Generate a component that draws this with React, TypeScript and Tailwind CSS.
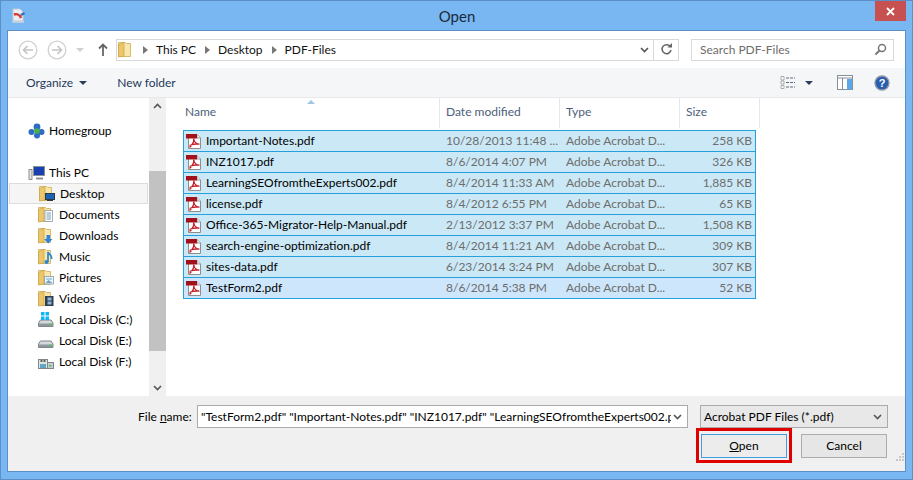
const font = { fontFamily: 'Lato, "Noto Sans", sans-serif' }

const files = [
  ["Important-Notes.pdf", "10/28/2013 11:48 ...", "258 KB"],
  ["INZ1017.pdf", "8/6/2014 4:07 PM", "326 KB"],
  ["LearningSEOfromtheExperts002.pdf", "8/4/2014 11:33 AM", "1,885 KB"],
  ["license.pdf", "8/4/2012 6:55 PM", "65 KB"],
  ["Office-365-Migrator-Help-Manual.pdf", "2/13/2012 3:37 PM", "1,508 KB"],
  ["search-engine-optimization.pdf", "8/4/2014 11:21 AM", "309 KB"],
  ["sites-data.pdf", "6/23/2014 3:24 PM", "307 KB"],
  ["TestForm2.pdf", "8/6/2014 5:38 PM", "52 KB"],
]

function PdfIcon() {
  return (
    <svg width="16" height="17" viewBox="0 0 16 17" className="shrink-0">
      <path d="M2.500 1.500h8.500l3.500 3.500v10.500h-12z" fill="#fff" stroke="#8e8e8e" />
      <path d="M11 1.500v3.500h3.500" fill="#eee" stroke="#9a9a9a" />
      <path d="M0 1h11v4.500H0z" fill="#a2101b" />
      <path d="M3.500 14.500c2.200-2 4.700-5.500 4.200-9M7.700 5.500c.4 3.300 2.600 5.500 5.800 5.700M3.500 12.500c3.200-1.500 6.500-1.800 10-1.300" fill="none" stroke="#c21f2a" strokeWidth="1.300" />
    </svg>
  )
}

function Folder({ children }: { children?: React.ReactNode }) {
  return (
    <svg width="16" height="17" viewBox="0 0 16 17" className="shrink-0">
      <path d="M.500 1.500h7l1 1h4v13h-12z" fill="#f8e6ad" stroke="#d6bb6e" />
      <path d="M.500 3.500l5.500-2v13.500l-5.500 1z" fill="#ecc66a" stroke="#c7a349" strokeWidth=".7" />
      {children}
    </svg>
  )
}

const navIcons: Record<string, React.ReactNode> = {
  Desktop: <Folder><rect x="6.500" y="8.500" width="9" height="6" fill="#1d63b5" stroke="#2c3a48" /><path d="M8 15.500h6" stroke="#2c3a48" /></Folder>,
  Documents: <Folder><rect x="7" y="4.500" width="7.500" height="11" fill="#fff" stroke="#8a9aa8" strokeWidth=".8" /><path d="M8.500 7h4.500M8.500 9h4.500M8.500 11h4.500M8.500 13h4.500" stroke="#6a8fb0" strokeWidth=".9" /></Folder>,
  Downloads: <Folder><path d="M8.500 8h3.500v4h2.500l-4.300 4.500L6 12h2.500z" fill="#2f86d8" /></Folder>,
  Music: <Folder><path d="M10 14V4c.5 2.500 4.500 3 3.500 7" fill="none" stroke="#2a88d0" strokeWidth="1.700" /><circle cx="8.500" cy="14" r="2" fill="#2a88d0" /></Folder>,
  Pictures: <Folder><rect x="6.500" y="7.500" width="9" height="7.500" fill="#edf4f8" stroke="#8a9aa8" strokeWidth=".8" /><path d="M7.500 14l3-3 4 3z" fill="#6fa3bf" /><rect x="8" y="9" width="6" height="2" fill="#a9d0e3" /></Folder>,
  Videos: <Folder><rect x="7" y="6" width="8.500" height="10" fill="#2d3f50" /><path d="M9.500 7.500h4v3h-4zM9.500 11.500h4v3h-4z" fill="#8fb6d6" /></Folder>,
}

function Drive({ children }: { children?: React.ReactNode }) {
  return (
    <svg width="16" height="17" viewBox="0 0 16 17" className="shrink-0">
      <path d="M2.500 9h10.500l2 3v3.500H.500V12z" fill="#d5d9dc" stroke="#7f868c" />
      <path d="M1 12.500h14v2.500H1z" fill="#8f989f" />
      <rect x="11.500" y="12.500" width="2.500" height="1.500" fill="#55c455" />
      {children}
    </svg>
  )
}

function NavRow({ label, active, icon }: { label: string; active?: boolean; icon: React.ReactNode }) {
  return (
    <div className={`ml-px flex h-[21px] w-[139px] items-center gap-[5px] pl-[29px] ${active ? "border border-[#dcdcdc] bg-[#f5f5f5]" : ""}`}>
      {icon}
      <span className="text-black">{label}</span>
    </div>
  )
}

function Chev({ className = "" }: { className?: string }) {
  return (
    <svg width="9" height="6" viewBox="0 0 9 6" className={className}>
      <path d="M1 1l3.500 3.500L8 1" fill="none" stroke="#555" strokeWidth="1.600" />
    </svg>
  )
}

function Tri({ color = "#2b3f5c" }: { color?: string }) {
  return (
    <svg width="8" height="4" viewBox="0 0 8 4">
      <path d="M0 0h8L4 4z" fill={color} />
    </svg>
  )
}

function Crumb({ label }: { label: string }) {
  return (
    <>
      <svg width="5" height="8" viewBox="0 0 5 8" className="ml-[9px] mr-[8px]">
        <path d="M0 0l5 4-5 4z" fill="#777" />
      </svg>
      <span className="text-[#111]">{label}</span>
    </>
  )
}

function NavCircle({ dir }: { dir: "l" | "r" }) {
  return (
    <svg width="20" height="20" viewBox="0 0 20 20">
      <circle cx="10" cy="10" r="8.800" fill="#fff" stroke="#d0d0d0" strokeWidth="1.300" />
      <path d={dir === "l" ? "M15 10H6M9.500 6L5.500 10l4 4" : "M5 10h9M10.500 6l4 4-4 4"} fill="none" stroke="#c4c4c4" strokeWidth="1.600" />
    </svg>
  )
}

export default function App() {
  return (
    <div style={font} className="flex h-[480px] w-[913px] flex-col overflow-hidden border border-[#5b8fc5] bg-[#78b7f2] text-[12px]">
      {/* Title bar */}
      <div className="flex h-[29px] shrink-0 items-start">
        <div className="flex h-[30px] w-[30px] items-center pl-[10px]">
          <svg width="16" height="16" viewBox="0 0 16 16">
            <path d="M2 1h7l3 3v9H2z" fill="#e9edf1" stroke="#c4ccd4" />
            <path d="M1 14h12" stroke="#cfd6dc" strokeWidth="1.500" />
            <path d="M3 6.500c3-1 6 .5 7 3.500" fill="none" stroke="#d9332b" strokeWidth="2.500" />
            <path d="M10 7l3.500-2" stroke="#2f6fc8" strokeWidth="2.500" />
          </svg>
        </div>
        <div className="flex-1 pl-[8px] pt-[5px] text-center text-[15px] leading-[20px] text-[#1d2a3a]">Open</div>
        <div className="mr-[6px] flex h-[20px] w-[31px] items-center justify-center bg-[#c75050]">
          <svg width="9" height="9" viewBox="0 0 9 9">
            <path d="M1 1l7 7M8 1L1 8" stroke="#fff" strokeWidth="1.800" />
          </svg>
        </div>
      </div>

      <div className="mx-[6px] mb-[7px] flex min-h-0 flex-1 flex-col border border-[#5b8fc5] bg-white">
        {/* Address row */}
        <div className="flex h-[37px] shrink-0 items-center pl-[10px] pr-[11px]">
          <NavCircle dir="l" />
          <div className="w-[9px]" />
          <NavCircle dir="r" />
          <div className="ml-[9px]"><Tri color="#d0d0d0" /></div>
          <svg width="12" height="14" viewBox="0 0 12 14" className="ml-[13px]">
            <path d="M6 1v12M2 5.500L6 1.500l4 4" fill="none" stroke="#666" strokeWidth="1.800" />
          </svg>
          <div className="ml-[7px] flex h-[22px] w-[563px] items-center border border-[#d9d9d9] pl-[1px]">
            <Folder />
            <div className="flex flex-1 items-center"><Crumb label="This PC" /><Crumb label="Desktop" /><Crumb label="PDF-Files" /></div>
            <Chev className="mr-[4px]" />
            <div className="flex h-full w-[25px] items-center justify-center border-l border-[#d9d9d9]">
              <svg width="13" height="13" viewBox="0 0 13 13">
                <path d="M10.500 4a4.500 4.500 0 1 0 .5 3" fill="none" stroke="#666" strokeWidth="1.500" />
                <path d="M7.500 4.500h4.500V0z" fill="#666" />
              </svg>
            </div>
          </div>
          <div className="ml-[12px] flex h-[22px] flex-1 items-center border border-[#d9d9d9] pl-[8px] pr-[4px] text-[#6d6d6d]">
            <span className="flex-1">Search PDF-Files</span>
            <svg width="13" height="13" viewBox="0 0 13 13" className="mr-[2px]">
              <circle cx="8" cy="5" r="3.500" fill="none" stroke="#777" strokeWidth="1.500" />
              <path d="M5.500 7.500L1.500 11.500" stroke="#777" strokeWidth="2" />
            </svg>
          </div>
        </div>

        {/* Command bar */}
        <div className="flex h-[30px] shrink-0 items-center border-b border-[#e6e8eb] bg-[#f5f6f7] text-[#1e395b]">
          <span className="ml-[18px]">Organize</span>
          <div className="ml-[6px]"><Tri /></div>
          <span className="ml-[30px]">New folder</span>
          <div className="flex-1" />
          <svg width="16" height="13" viewBox="0 0 16 13">
            <path d="M1 .5h3v3.500H1zM1 5h3v3H1zM1 9.500h3v3H1z" fill="#fff" stroke="#999" strokeWidth=".8" />
            <path d="M6 2h9M6 6.500h9M6 11h9" stroke="#5a6b80" strokeDasharray="3 1" />
          </svg>
          <div className="ml-[9px]"><Tri /></div>
          <svg width="17" height="16" viewBox="0 0 17 16" className="ml-[24px]">
            <rect x=".5" y=".5" width="15" height="14" fill="#fff" stroke="#8a8f96" />
            <path d="M.5 3h15M5.500 3v12" stroke="#8a8f96" />
            <rect x="10" y="4" width="5" height="10.500" fill="#5ba7ea" />
          </svg>
          <svg width="16" height="16" viewBox="0 0 16 16" className="ml-[20px] mr-[15px]">
            <circle cx="8" cy="8" r="7" fill="#2a5db0" stroke="#8d97a5" strokeWidth="1.300" />
            <text x="8" y="12" textAnchor="middle" fontSize="11" fontWeight="700" fill="#fff" fontFamily="Liberation Sans, sans-serif">?</text>
          </svg>
        </div>

        {/* Main */}
        <div className="flex min-h-0 flex-1 overflow-hidden">
          {/* Navigation */}
          <div className="w-[141px] shrink-0 overflow-hidden pt-[22px]">
            <div className="flex h-[21px] items-center gap-[4px] pl-[20px]">
              <svg width="17" height="16" viewBox="0 0 17 16">
                <circle cx="9" cy="4" r="3.400" fill="#2f6cc4" />
                <circle cx="3.500" cy="9" r="3" fill="#2f6cc4" />
                <circle cx="13.500" cy="9" r="3" fill="#2f6cc4" />
                <circle cx="9" cy="12.500" r="3" fill="#2f6cc4" />
                <circle cx="9" cy="8" r="2.800" fill="#46b04a" />
              </svg>
              <span className="text-black">Homegroup</span>
            </div>
            <div className="h-[21px]" />
            <div className="flex h-[21px] items-center gap-[4px] pl-[20px]">
              <svg width="17" height="16" viewBox="0 0 17 16">
                <rect x="5.500" y="1.500" width="11" height="9" fill="#1a3fb0" stroke="#8b9199" />
                <path d="M8 13.500h7" stroke="#8b9199" strokeWidth="2" />
                <rect x="1" y="4.500" width="3" height="10" fill="#e2e6e8" stroke="#777" strokeWidth=".8" />
              </svg>
              <span className="text-black">This PC</span>
            </div>
            <NavRow label="Desktop" active icon={navIcons.Desktop} />
            <NavRow label="Documents" icon={navIcons.Documents} />
            <NavRow label="Downloads" icon={navIcons.Downloads} />
            <NavRow label="Music" icon={navIcons.Music} />
            <NavRow label="Pictures" icon={navIcons.Pictures} />
            <NavRow label="Videos" icon={navIcons.Videos} />
            <NavRow
              label="Local Disk (C:)"
              icon={<Drive><path d="M3 1h3.500v3.500H3zM7.500 1H11v3.500H7.500zM3 5.500h3.500V9H3zM7.500 5.500H11V9H7.500z" fill="#10b4ee" /></Drive>}
            />
            <NavRow label="Local Disk (E:)" icon={<Drive />} />
            <NavRow
              label="Local Disk (F:)"
              icon={
                <svg width="16" height="17" viewBox="0 0 16 17" className="shrink-0">
                  <rect x=".5" y="6.500" width="9" height="9" fill="#dfe6df" stroke="#7f868c" />
                  <path d="M2 11h6v4H2z" fill="#5fa7c9" />
                  <path d="M2.500 8h2M5.500 8h2" stroke="#333" strokeWidth="1.500" />
                  <rect x="9.500" y="9.500" width="6" height="6" fill="#c8ccd0" stroke="#7f868c" />
                  <rect x="11" y="12" width="2.500" height="1.500" fill="#55c455" />
                </svg>
              }
            />
            <div className="h-[21px]" />
            <div className="flex h-[21px] items-center pl-[25px]">
              <div className="h-[16px] w-[10px] rounded-full bg-[#6f9fc8]" />
            </div>
          </div>

          {/* Nav scrollbar */}
          <div className="flex w-[17px] shrink-0 flex-col bg-[#f0f0f0]">
            <div className="flex h-[16px] shrink-0 rotate-180 items-center justify-center"><Chev /></div>
            <div className="h-[57px] shrink-0" />
            <div className="h-[180px] shrink-0 bg-[#c2c2c2]" />
            <div className="flex-1" />
            <div className="flex h-[16px] shrink-0 items-center justify-center"><Chev /></div>
          </div>

          {/* File list */}
          <div className="min-w-0 flex-1 pl-[17px]">
            <div className="flex h-[30px] text-[#4c607a]">
              <div className="relative w-[257px] border-r border-[#e5e9ee] pl-[2px] pt-[5px]">
                Name
                <div className="absolute left-[124px] top-[2px] h-0 w-0 border-x-[4px] border-b-[4px] border-x-transparent border-b-[#9cc8e4]" />
              </div>
              <div className="w-[120px] border-r border-[#e5e9ee] pl-[6px] pt-[5px]">Date modified</div>
              <div className="w-[120px] border-r border-[#e5e9ee] pl-[6px] pt-[5px]">Type</div>
              <div className="w-[80px] border-r border-[#e5e9ee] pl-[6px] pt-[5px]">Size</div>
            </div>
            <div className="mt-[2px] w-[573px]">
              {files.map((f, i) => {
                const last = i === files.length - 1
                return (
                  <div key={f[0]} className={`-mb-px flex h-[22px] items-center border border-[#26a0da] ${last ? "bg-[#cde6fb]" : "bg-[#cbe8f6]"}`}>
                    <div className="ml-[2px] mr-[4px]"><PdfIcon /></div>
                    <span className="w-[240px] text-black">{f[0]}</span>
                    <span className="w-[120px] whitespace-nowrap text-[#6d6d6d]">{f[1]}</span>
                    <span className="w-[115px] whitespace-nowrap text-[#6d6d6d]">Adobe Acrobat D...</span>
                    <span className="flex-1 pr-[3px] text-right text-[#6d6d6d]">{f[2]}</span>
                  </div>
                )
              })}
            </div>
          </div>
        </div>

        {/* Bottom */}
        <div className="h-[75px] shrink-0 bg-[#f0f0f0]">
          <div className="flex pl-[130px] pt-[9px]">
            <span className="w-[59px] leading-[23px] text-black">File <span className="underline">n</span>ame:</span>
            <div className="flex h-[23px] w-[491px] items-center border border-[#ababab] bg-white pl-[3px] pr-[5px]">
              <span className="min-w-0 flex-1 overflow-hidden whitespace-nowrap text-black">"TestForm2.pdf" "Important-Notes.pdf" "INZ1017.pdf" "LearningSEOfromtheExperts002.pdf"</span>
              <Chev className="ml-[2px] shrink-0" />
            </div>
            <div className="ml-[12px] flex h-[23px] w-[188px] items-center border border-[#ababab] bg-[#e8e8e8] pl-[3px] pr-[5px]">
              <span className="flex-1 text-black">Acrobat PDF Files (*.pdf)</span>
              <Chev />
            </div>
          </div>
          <div className="flex items-center pl-[688px]">
            <div className="border-[3px] border-[#e00000] px-[2px] pb-[2px] pt-[3px]">
              <div className="flex h-[24px] w-[86px] items-center justify-center border border-[#3c9fe0] bg-[#ececec] text-black"><span><span className="underline">O</span>pen</span></div>
            </div>
            <div className="ml-[9px] flex h-[24px] w-[86px] items-center justify-center border border-[#acacac] bg-[#e6e6e6] text-black">Cancel</div>
            <svg width="9" height="9" viewBox="0 0 9 9" className="ml-[8px] mt-[24px]">
              <path d="M7 0h2v2H7zM4 3h2v2H4zM7 3h2v2H7zM1 6h2v2H1zM4 6h2v2H4zM7 6h2v2H7z" fill="#c8c8c8" />
            </svg>
          </div>
        </div>
      </div>
    </div>
  )
}
